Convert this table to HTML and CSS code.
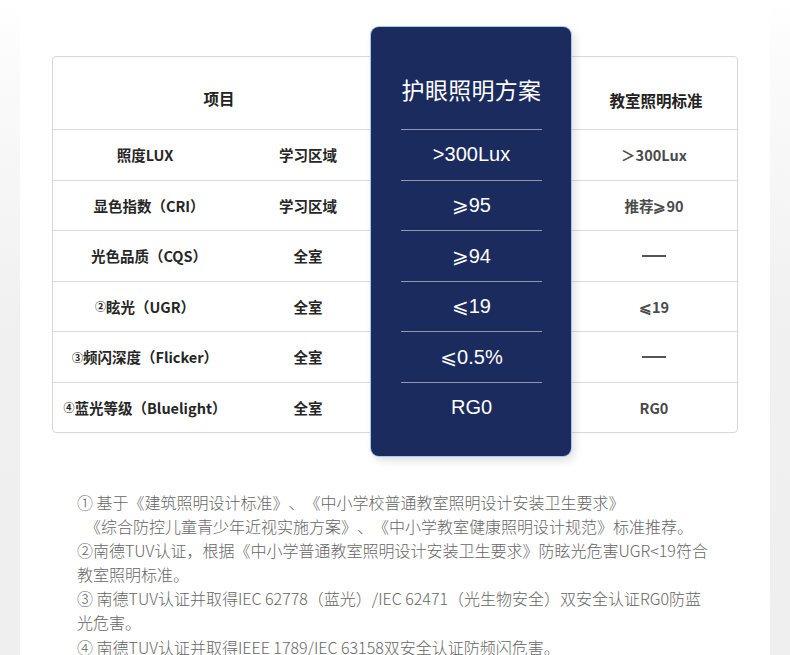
FILE: index.html
```html
<!DOCTYPE html>
<html lang="zh-CN">
<head>
<meta charset="utf-8">
<title>护眼照明方案</title>
<link rel="stylesheet" href="styles.css">
</head>
<body>
<div class="page">
  <div class="compare">
    <div class="table">
      <div class="row head">
        <div class="cell span2 item-head">项目</div>
        <div class="cell"></div>
        <div class="cell std-head">教室照明标准</div>
      </div>
      <div class="row">
        <div class="cell name">照度LUX</div>
        <div class="cell area">学习区域</div>
        <div class="cell"></div>
        <div class="cell std">＞300Lux</div>
      </div>
      <div class="row">
        <div class="cell name shift">显色指数（CRI）</div>
        <div class="cell area">学习区域</div>
        <div class="cell"></div>
        <div class="cell std">推荐⩾90</div>
      </div>
      <div class="row">
        <div class="cell name shift">光色品质（CQS）</div>
        <div class="cell area">全室</div>
        <div class="cell"></div>
        <div class="cell std"><span class="dash"></span></div>
      </div>
      <div class="row">
        <div class="cell name"><span class="num">②</span>眩光（UGR）</div>
        <div class="cell area">全室</div>
        <div class="cell"></div>
        <div class="cell std">⩽19</div>
      </div>
      <div class="row">
        <div class="cell name"><span class="num">③</span>频闪深度（Flicker）</div>
        <div class="cell area">全室</div>
        <div class="cell"></div>
        <div class="cell std"><span class="dash"></span></div>
      </div>
      <div class="row">
        <div class="cell name"><span class="num">④</span>蓝光等级（Bluelight）</div>
        <div class="cell area">全室</div>
        <div class="cell"></div>
        <div class="cell std">RG0</div>
      </div>
    </div>
    <div class="plan">
      <div class="plan-title">护眼照明方案</div>
      <div class="plan-row">&gt;300Lux</div>
      <div class="plan-row">⩾95</div>
      <div class="plan-row">⩾94</div>
      <div class="plan-row">⩽19</div>
      <div class="plan-row">⩽0.5%</div>
      <div class="plan-row">RG0</div>
    </div>
  </div>
  <div class="notes">
    <p>① 基于《建筑照明设计标准》、《中小学校普通教室照明设计安装卫生要求》<br><span class="indent">《综合防控儿童青少年近视实施方案》、《中小学教室健康照明设计规范》标准推荐。</span></p>
    <p>②南德TUV认证，根据《中小学普通教室照明设计安装卫生要求》防眩光危害UGR&lt;19符合<br>教室照明标准。</p>
    <p>③ 南德TUV认证并取得IEC 62778（蓝光）/IEC 62471（光生物安全）双安全认证RG0防蓝<br>光危害。</p>
    <p>④ 南德TUV认证并取得IEEE 1789/IEC 63158双安全认证防频闪危害。</p>
  </div>
</div>
</body>
</html>
```
FILE: styles.css
```css
* { box-sizing: border-box; }
html, body { margin: 0; padding: 0; }
body {
  width: 790px;
  height: 655px;
  overflow: hidden;
  background: linear-gradient(to bottom, #ffffff 0px, #fbfbfb 60px, #f0f0f0 330px, #efefef 655px);
  font-family: "Noto Sans CJK SC", "Noto Sans", sans-serif;
  text-spacing-trim: space-all;
}
.page {
  margin: 0 20px;
  height: 655px;
  background: #fff;
  padding-top: 56px;
  padding-left: 32px;
}
.compare {
  position: relative;
  width: 686px;
}
.table {
  border: 1px solid #d8d8d8;
  border-radius: 4px;
  background: #fff;
}
.row {
  display: grid;
  grid-template-columns: 184px 142px 192px 166px;
  height: 50.5px;
  border-top: 1px solid #dadada;
}
.row.head {
  height: 72px;
  border-top: none;
  grid-template-columns: 326px 192px 166px;
}
.cell {
  display: flex;
  align-items: center;
  justify-content: center;
  white-space: nowrap;
}
.item-head, .std-head {
  font-size: 15.5px;
  font-weight: 700;
  color: #222;
  padding-top: 10px;
}
.std-head { padding-top: 13px; padding-left: 4px; }
.item-head { padding-left: 6px; }
.name, .area {
  font-size: 14.5px;
  font-weight: 700;
  color: #262626;
}
.name.shift { padding-left: 8px; }
.num {
  font-size: 11px;
  font-weight: 700;
}
.std {
  font-size: 14.5px;
  font-weight: 700;
  color: #4a4a4a;
}
.dash {
  display: inline-block;
  width: 24px;
  height: 1.5px;
  background: #555;
}
.plan {
  position: absolute;
  left: 319px;
  top: -29px;
  width: 200px;
  height: 429px;
  background: #1b2b5e;
  border-radius: 8px;
  box-shadow: 0 0 0 1px #a9c6ee, 3px 4px 10px rgba(0, 0, 0, 0.14);
  padding: 0 29px 0 30px;
  color: #fff;
}
.plan-title {
  height: 102px;
  display: flex;
  align-items: center;
  justify-content: center;
  padding-top: 22px;
  font-size: 23px;
  font-weight: 400;
  letter-spacing: 0.3px;
}
.plan-row {
  height: 50.5px;
  border-top: 1px solid #8e97b3;
  display: flex;
  align-items: center;
  justify-content: center;
  font-family: "Liberation Sans", "DejaVu Sans", sans-serif;
  font-size: 20px;
}
.notes {
  margin-top: 57px;
  padding-left: 25px;
  color: #666;
  font-size: 16px;
  font-weight: 300;
  line-height: 24.1px;
}
.notes p { margin: 0; }
.indent { padding-left: 8px; }
```
